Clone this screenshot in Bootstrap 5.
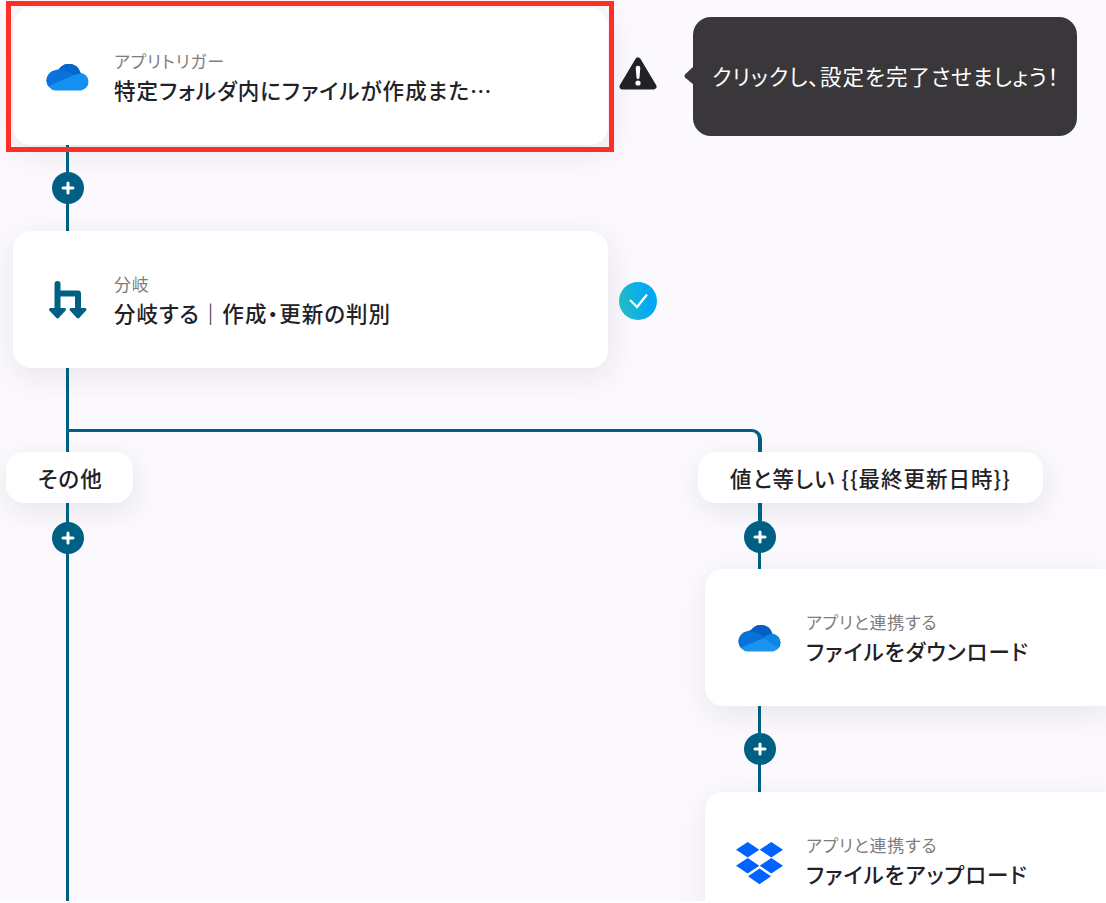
<!DOCTYPE html>
<html lang="ja">
<head>
    <meta charset="UTF-8">
    <meta name="viewport" content="width=device-width, initial-scale=1.0">
    <title>フロー</title>
    <link rel="stylesheet" href="https://cdn.jsdelivr.net/npm/bootstrap@5.3.3/dist/css/bootstrap.min.css">
<style>
        html {
            background: #fefdff;
        }
        body {
            background: #fbf9fd;
            color: #222126;
            font-family: "Noto Sans CJK JP", sans-serif;
            font-feature-settings: "palt";
        }
        .flow {
            width: 1106px;
            height: 901px;
            padding-top: 8px;
        }
        .step-row {
            padding-left: 13px;
        }
        .step {
            width: 595px;
            height: 137px;
            padding: 0 33px;
            border: 0;
            border-radius: 18px;
            background: #fff;
            box-shadow: 2px 8px 32px rgba(34, 33, 38, .09);
        }
        .step-icon {
            width: 43px;
            margin-right: 25px;
        }
        .step-text {
            padding-top: 2px;
        }
        .step-type {
            font-size: 17px;
            line-height: 24px;
            letter-spacing: .8px;
            color: #7d7d80;
        }
        .step-title {
            font-size: 21.5px;
            line-height: 32px;
            font-weight: 500;
            letter-spacing: 1.03px;
            margin-top: 1px;
        }
        .frame {
            left: 6px;
            top: 1px;
            width: 608px;
            height: 151px;
            border: 5px solid #ff2f25;
            z-index: 3;
        }
        .warn {
            margin-left: 11px;
            margin-bottom: 6px;
        }
        .done {
            margin-left: 11px;
            margin-top: 2px;
        }
        .tip {
            width: 384px;
            height: 119px;
            margin-left: 36px;
            border-radius: 18px;
            background: #39373a;
            color: #fff;
            font-size: 21.5px;
            padding: 0 0 0 19px;
            letter-spacing: 1px;
        }
        .tip-arrow {
            left: -9px;
            top: 49px;
        }
        .link-line {
            width: 3px;
            background: #006083;
            margin-left: 66px;
        }
        .lane-b .link-line {
            margin-left: 60px;
        }
        .lane-b .thick {
            width: 4px;
        }
        .plus {
            left: 50%;
            top: 27px;
            width: 32px;
            height: 32px;
            margin-left: -15.5px;
            border-radius: 50%;
            background: #006083;
        }
        .thick .plus {
            margin-left: -16px;
        }
        .fork {
            width: 693px;
            height: 23px;
            margin-top: 61px;
            border: solid #006083;
            border-width: 3px 4px 0 0;
            border-top-right-radius: 10px;
        }
        .lane-a {
            width: 698px;
        }
        .lane-b {
            width: 408px;
        }
        .cond {
            height: 51px;
            border-radius: 18px;
            background: #fff;
            font-size: 21.5px;
            font-weight: 500;
            letter-spacing: 1px;
            padding-top: 2px;
            box-shadow: 2px 8px 28px rgba(34, 33, 38, .09);
        }
        .cond-a {
            width: 127px;
            margin-left: 6px;
            padding-left: 32px;
        }
        .cond-b {
            width: 345px;
            padding-left: 32px;
        }
        /* cards in this lane run to the edge of the view */
        .lane-b .step {
            width: auto;
            margin-left: 7px;
            border-radius: 18px 0 0 18px;
        }
</style>
</head>
<body class="overflow-hidden">
    <!-- shared icons -->
    <svg class="position-absolute" width="0" height="0">
        <symbol id="i-plus" viewBox="0 0 32 32"><path d="M16 11v10M11 16h10" stroke="#fff" stroke-width="3" stroke-linecap="round"/></symbol>
        <clipPath id="cloud"><path transform="translate(-.8 -1) scale(1.04)" d="M10 27.500A9.800 9.800 0 0 1 10 8Q11.500 7.300 13 7.200A11.500 11.500 0 0 1 33.800 10.300A8.700 8.700 0 0 1 34.500 27.500Z"/></clipPath>
    </svg>

    <div class="flow position-relative overflow-hidden">
        <div class="frame position-absolute"></div>

        <div class="step-row d-flex align-items-center">
            <div class="step d-flex align-items-center flex-shrink-0">
                <svg class="step-icon flex-shrink-0" width="43" height="28" viewBox="0 0 43 28">
                    <g clip-path="url(#cloud)">
                        <rect width="43" height="28" fill="#1390f0"/>
                        <path d="M0 0H36V9.500L28 12 1 24H0Z" fill="#0873da"/>
                        <path d="M12 0H36V9.500L28 12Q20 7 12 6Z" fill="#0666cc"/>
                    </g>
                </svg>
                <div class="step-text text-nowrap">
                    <div class="step-type">アプリトリガー</div>
                    <div class="step-title">特定フォルダ内にファイルが作成また…</div>
                </div>
            </div>
            <svg class="warn flex-shrink-0" width="38" height="36" viewBox="0 0 38 36">
                <path d="M19 4.500L34.500 30.500H3.500Z" fill="#222126" stroke="#222126" stroke-width="6" stroke-linejoin="round"/>
                <path d="M16.700 12a2.300 2.300 0 0 1 4.600 0l-.8 9.500a1.500 1.500 0 0 1-3 0z" fill="#fff"/><circle cx="19" cy="27" r="2.600" fill="#fff"/>
            </svg>
            <div class="tip position-relative d-flex align-items-center text-nowrap flex-shrink-0">
                <svg class="tip-arrow position-absolute" width="10" height="20" viewBox="0 0 10 20"><path d="M10 0L1 8.500Q0 10 1 11.500L10 19Z" fill="#39373a"/></svg>
                クリックし、設定を完了させましょう！
            </div>
        </div>

        <div class="link-line position-relative" style="height:86px">
            <svg class="plus position-absolute"><use href="#i-plus"/></svg>
        </div>

        <div class="step-row d-flex align-items-center">
            <div class="step d-flex align-items-center position-relative">
                <svg class="step-icon flex-shrink-0" width="43" height="42" viewBox="0 0 43 42">
                    <path d="M11.500 5V30M11.500 14.500H32V30" fill="none" stroke="#006083" stroke-width="6" stroke-linecap="round" stroke-linejoin="round"/>
                    <path d="M4.500 30.500H18.500L11.500 38ZM25 30.500H39L32 38Z" fill="#006083" stroke="#006083" stroke-width="3" stroke-linejoin="round"/>
                </svg>
                <div class="step-text text-nowrap">
                    <div class="step-type">分岐</div>
                    <div class="step-title">分岐する｜作成・更新の判別</div>
                </div>
            </div>
            <svg class="done" width="38" height="38" viewBox="0 0 38 38">
                <defs><linearGradient id="done" x1="0" x2="1" y1=".6" y2=".4"><stop offset="0" stop-color="#27bfc6"/><stop offset=".8" stop-color="#00a8f6"/></linearGradient></defs>
                <circle cx="19" cy="19" r="19" fill="url(#done)"/>
                <path d="M11 18L18 25 28 12.500" fill="none" stroke="#fff" stroke-width="2.200"/>
            </svg>
        </div>

        <!-- fork into two branches -->
        <div class="d-flex" style="height:84px">
            <div class="link-line"></div>
            <div class="fork"></div>
        </div>

        <div class="d-flex">
            <div class="lane-a flex-shrink-0">
                <div class="cond cond-a d-flex align-items-center text-nowrap position-relative">その他</div>
                <div class="link-line position-relative" style="height:398px">
                    <svg class="plus position-absolute" style="top:19px"><use href="#i-plus"/></svg>
                </div>
            </div>
            <div class="lane-b flex-shrink-0">
                <div class="cond cond-b d-flex align-items-center text-nowrap position-relative">値と等しい {{最終更新日時}}</div>
                <div class="link-line thick position-relative" style="height:34px">
                    <svg class="plus position-absolute" style="top:17.5px"><use href="#i-plus"/></svg>
                </div>
                <div class="link-line" style="height:32px"></div>
                <div class="step d-flex align-items-center">
                    <svg class="step-icon flex-shrink-0" width="43" height="28" viewBox="0 0 43 28">
                        <g clip-path="url(#cloud)">
                            <rect width="43" height="28" fill="#1b94ee"/>
                            <path d="M0 5H20L26 14 2 24H0Z" fill="#0872d8"/>
                            <path d="M12 0H36V9.500Q30 10 26 14Q20 7 11 7Z" fill="#0560bf"/>
                            <path d="M25 14Q30 9.500 36 9H43V25Z" fill="#0b85e2"/>
                        </g>
                    </svg>
                    <div class="step-text text-nowrap">
                        <div class="step-type">アプリと連携する</div>
                        <div class="step-title">ファイルをダウンロード</div>
                    </div>
                </div>
                <div class="link-line position-relative" style="height:86px">
                    <svg class="plus position-absolute"><use href="#i-plus"/></svg>
                </div>
                <div class="step d-flex align-items-center">
                    <svg class="step-icon flex-shrink-0 overflow-visible mt-1" width="43" height="44" viewBox="0 0 43 44">
                        <path d="M9.700 1L21.300 8.700 9.700 16.500-2 8.700ZM33.300 1L45 8.700 33.300 16.500 21.700 8.700ZM9.700 17L21.300 24.700 9.700 32.500-2 24.700ZM33.300 17L45 24.700 33.300 32.500 21.700 24.700ZM21.500 27.500L33 35.200 21.500 43.200 10 35.200Z" fill="#0062ff"/>
                    </svg>
                    <div class="step-text text-nowrap">
                        <div class="step-type">アプリと連携する</div>
                        <div class="step-title">ファイルをアップロード</div>
                    </div>
                </div>
            </div>
        </div>
    </div>
    <script src="https://cdn.jsdelivr.net/npm/bootstrap@5.3.3/dist/js/bootstrap.bundle.min.js"></script>
</body>
</html>
